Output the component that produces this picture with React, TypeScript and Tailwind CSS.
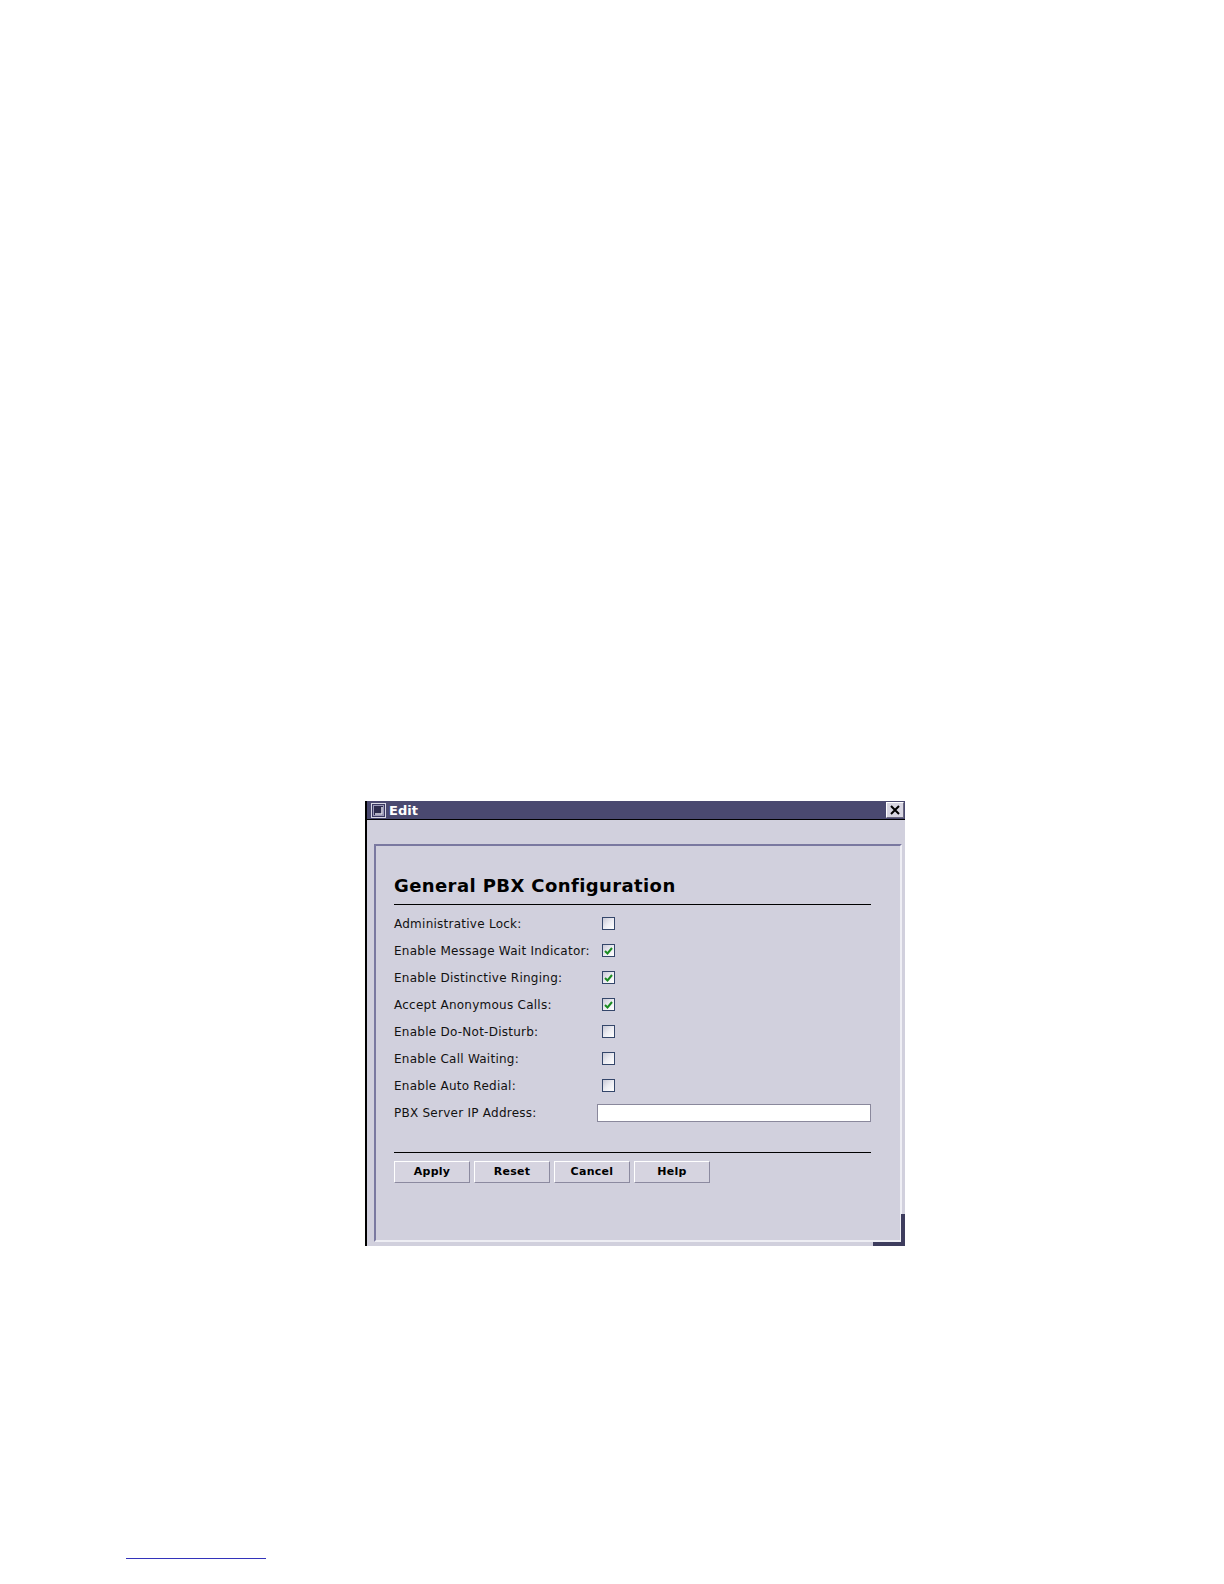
import React from "react";

const rows: { label: string; checked?: boolean; input?: boolean }[] = [
  { label: "Administrative Lock:", checked: false },
  { label: "Enable Message Wait Indicator:", checked: true },
  { label: "Enable Distinctive Ringing:", checked: true },
  { label: "Accept Anonymous Calls:", checked: true },
  { label: "Enable Do-Not-Disturb:", checked: false },
  { label: "Enable Call Waiting:", checked: false },
  { label: "Enable Auto Redial:", checked: false },
  { label: "PBX Server IP Address:", input: true },
];

function Checkbox({ checked }: { checked?: boolean }) {
  return (
    <div className="ml-[5px] w-[13px] h-[13px] border border-[#34466a] bg-gradient-to-br from-[#c9c9d6] via-[#ececf2] to-white flex items-center justify-center">
      {checked && (
        <svg width="9" height="8" viewBox="0 0 9 8">
          <path d="M1 4 L3.5 6.5 L8 1" fill="none" stroke="#1b8c22" strokeWidth="2" />
        </svg>
      )}
    </div>
  );
}

function Btn({ children }: { children: React.ReactNode }) {
  return (
    <div className="w-[76px] h-[22px] bg-[#d6d4e0] border border-t-white border-l-white border-r-[#8c8aa0] border-b-[#8c8aa0] flex items-center justify-center text-[11px] font-bold text-black tracking-[0.3px]">
      {children}
    </div>
  );
}

export default function App() {
  return (
    <div
      className="w-[1224px] h-[1584px] bg-white"
      style={{ fontFamily: '"DejaVu Sans", Verdana, sans-serif' }}
    >
      <div className="pt-[801px] pl-[365px]">
        <div className="relative w-[540px] h-[445px] border-l-2 border-black flex flex-col bg-[#d1d0dd]">
          {/* title bar */}
          <div className="h-[19px] bg-[#4a4970] border-b border-black flex items-center pl-[4px] pr-[1px]">
            <svg width="15" height="15" viewBox="0 0 15 15">
              <rect x="0.5" y="0.5" width="14" height="14" fill="#3a3960" stroke="#d8d8e4" />
              <rect x="2.5" y="2.5" width="10" height="10" fill="#2c2b4c" stroke="#9a98b8" />
              <path d="M4 11 H11 V4" fill="none" stroke="#e0e0ea" strokeWidth="1.5" />
            </svg>
            <span className="ml-[3px] text-white text-[13px] font-bold leading-none">Edit</span>
            <div className="ml-auto w-[18px] h-[16px] bg-[#d8d6e2] border border-t-white border-l-white border-r-[#6a6880] border-b-[#6a6880] flex items-center justify-center">
              <svg width="10" height="10" viewBox="0 0 10 10">
                <path d="M1 1 L9 9 M9 1 L1 9" stroke="#000" strokeWidth="2" />
              </svg>
            </div>
          </div>
          {/* body */}
          <div className="flex-1 pt-[24px] pl-[7px] pr-[3px] pb-[4px] flex">
            <div className="flex-1 border-2 border-t-[#7a78a0] border-l-[#7a78a0] border-r-[#eeeef4] border-b-[#eeeef4] pl-[18px] pr-[29px] pt-[28px]">
              <div className="text-[18px] font-bold text-black leading-[24px] tracking-[0.4px]">
                General PBX Configuration
              </div>
              <div className="mt-[6px] h-px bg-black" />
              <div className="mt-[5px] flex flex-col">
                {rows.map((r) => (
                  <div key={r.label} className="h-[27px] flex items-center">
                    <div className="w-[203px] text-[12px] text-[#111] tracking-[0.25px]">{r.label}</div>
                    {r.input ? (
                      <div className="flex-1 h-[18px] bg-white border border-[#8a889c]" />
                    ) : (
                      <Checkbox checked={r.checked} />
                    )}
                  </div>
                ))}
              </div>
              <div className="mt-[26px] h-px bg-black" />
              <div className="mt-[8px] flex gap-[4px]">
                <Btn>Apply</Btn>
                <Btn>Reset</Btn>
                <Btn>Cancel</Btn>
                <Btn>Help</Btn>
              </div>
            </div>
          </div>
          {/* dark corner */}
          <div className="absolute right-0 bottom-0 w-[4px] h-[32px] bg-[#3e3d5e]" />
          <div className="absolute right-0 bottom-0 w-[32px] h-[4px] bg-[#3e3d5e]" />
        </div>
      </div>
      <div className="mt-[312px] ml-[126px] w-[140px] h-px bg-[#3333bb]" />
    </div>
  );
}
